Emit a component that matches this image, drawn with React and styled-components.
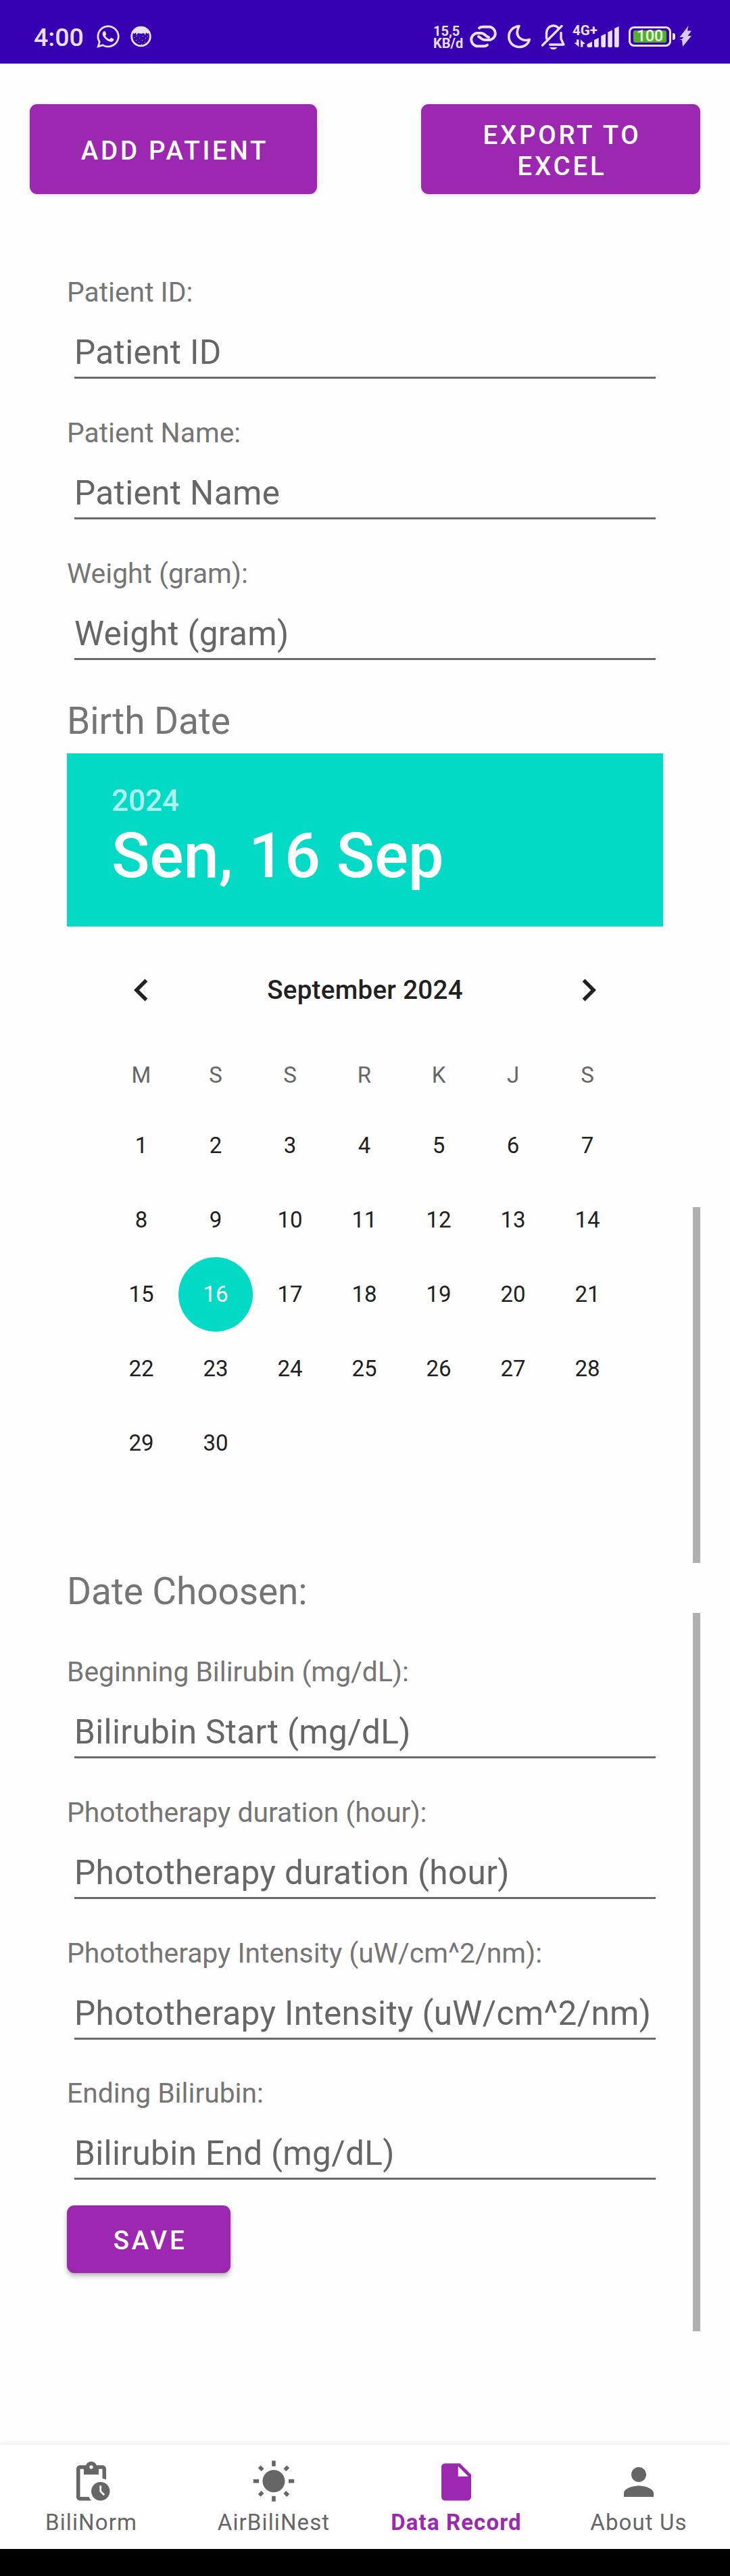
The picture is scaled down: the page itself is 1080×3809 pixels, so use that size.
import React from "react";
import styled, { createGlobalStyle } from "styled-components";
import { MdInsertDriveFile, MdPendingActions, MdPerson, MdWbSunny } from "react-icons/md";
import { FaWhatsapp } from "react-icons/fa";

const GlobalStyle = createGlobalStyle`
  body {
    margin: 0;
    background: #fefefe;
    font-family: Roboto, "Liberation Sans", sans-serif;
  }
  * { box-sizing: border-box; }
`;

const Screen = styled.div`
  position: relative;
  display: flex;
  flex-direction: column;
  width: 1080px;
  height: 3809px;
  background: #fefefe;
  overflow: hidden;
`;

const StatusBar = styled.header`
  display: flex;
  align-items: flex-start;
  justify-content: space-between;
  height: 94px;
  padding: 34px 56px 0 50px;
  background: #3700b3;
  color: #ebe0fa;
`;

const StatusGroup = styled.div`
  display: flex;
  align-items: center;
  height: 40px;
`;

const Clock = styled.span`
  width: 91px;
  padding-top: 2px;
  font-size: 37.5px;
  font-weight: 500;
  line-height: 40px;
`;

const NetSpeed = styled.div`
  display: flex;
  flex-direction: column;
  width: 52px;
  padding-top: 1px;
  font-size: 20px;
  font-weight: 700;
  line-height: 18px;
  white-space: nowrap;
`;

const Glyph = styled.svg`
  display: block;
  flex: none;
  margin-right: ${(p) => p.$gap || 0}px;
`;

const Signal = styled.div`
  display: flex;
  align-items: center;
  width: 83px;
  height: 40px;
`;

const Network = styled.div`
  display: flex;
  flex-direction: column;
  align-items: flex-start;
  gap: 2px;
  width: 21px;
  height: 40px;
  font-size: 20.5px;
  font-weight: 700;
  line-height: 22px;
  white-space: nowrap;
`;

const Battery = styled.div`
  display: flex;
  align-items: center;
  justify-content: center;
  width: 63px;
  height: 30px;
  padding: 3px 4px;
  border: 3px solid #ebe0fa;
  border-radius: 8px;
`;

const Charge = styled.span`
  display: flex;
  align-items: center;
  justify-content: center;
  width: 49px;
  height: 18px;
  border-radius: 3px;
  background: #54b02c;
  color: #f0fbe9;
  font-size: 23px;
  font-weight: 500;
  line-height: 18px;
`;

const Nub = styled.span`
  width: 4px;
  height: 10px;
  margin: 0 6px 0 2px;
  border-radius: 0 3px 3px 0;
  background: #ebe0fa;
`;

const Actions = styled.div`
  display: flex;
  justify-content: space-between;
  padding: 60px 44px 0;
`;

const Button = styled.button`
  display: flex;
  align-items: center;
  justify-content: center;
  width: ${(p) => p.$width}px;
  height: ${(p) => p.$height}px;
  padding: 4px 42px 0 46px;
  border: 0;
  border-radius: 11px;
  background: #9c27b0;
  box-shadow: ${(p) => (p.$raised ? "0 5px 7px rgba(0,0,0,0.24), 0 1px 3px rgba(0,0,0,0.12)" : "0 1px 6px rgba(0,0,0,0.14)")};
  color: #fff;
  font-family: inherit;
  font-size: 38.5px;
  font-weight: 500;
  letter-spacing: 3.7px;
  line-height: 46px;
  text-align: center;
`;

const Form = styled.main`
  display: flex;
  flex-direction: column;
  padding: 121px 99px 0;
`;

const Field = styled.div`
  display: flex;
  flex-direction: column;
  height: ${(p) => p.$height || 208}px;
`;

const Label = styled.label`
  margin-bottom: 35px;
  color: #757575;
  font-size: 40.8px;
  line-height: 48px;
`;

const Hint = styled.div`
  height: 69px;
  margin: 0 11px;
  border-bottom: 3px solid #696969;
  color: #666;
  font-size: 49.5px;
  letter-spacing: 0.35px;
  line-height: 60px;
  white-space: nowrap;
`;

const Heading = styled.h2`
  margin: ${(p) => p.$margin};
  color: #757575;
  font-size: 55px;
  font-weight: 400;
  letter-spacing: -0.1px;
  line-height: 66px;
`;

const DateHeader = styled.section`
  display: flex;
  flex-direction: column;
  height: 256px;
  padding: 44px 66px 0;
  background: #03dac6;
  color: #fff;
`;

const Year = styled.span`
  color: rgba(255, 255, 255, 0.7);
  font-size: 44px;
  font-weight: 500;
  line-height: 52px;
`;

const PickedDate = styled.span`
  font-size: 93.5px;
  font-weight: 500;
  line-height: 110px;
`;

const Calendar = styled.section`
  display: flex;
  flex-direction: column;
  width: 770px;
  margin-left: 55px;
`;

const MonthRow = styled.div`
  display: flex;
  align-items: center;
  justify-content: space-between;
  height: 187px;
  padding: 0 20px 0 22px;
`;

const Month = styled.span`
  color: #212121;
  font-size: 38.5px;
  font-weight: 500;
  letter-spacing: 0.3px;
`;

const Week = styled.div`
  display: grid;
  grid-template-columns: repeat(7, 110px);
  margin-bottom: 16px;
  color: #666;
  font-size: 33px;
  line-height: 66px;
  text-align: center;
`;

const Days = styled.div`
  display: grid;
  grid-template-columns: repeat(7, 110px);
  grid-auto-rows: 110px;
`;

const Day = styled.span`
  border-radius: 50%;
  background: ${(p) => (p.$selected ? "#03dac6" : "transparent")};
  color: ${(p) => (p.$selected ? "#fff" : "#212121")};
  font-size: 33px;
  line-height: 110px;
  text-align: center;
`;

const ScrollThumb = styled.div`
  position: absolute;
  left: 1025px;
  top: ${(p) => p.$top}px;
  width: 11px;
  height: ${(p) => p.$height}px;
  background: #b0b0b0;
`;

const BottomNav = styled.nav`
  display: grid;
  grid-template-columns: repeat(4, 1fr);
  height: 154px;
  margin-top: auto;
  background: #fff;
  box-shadow: 0 0 10px rgba(0, 0, 0, 0.1);
`;

const Tab = styled.a`
  display: flex;
  flex-direction: column;
  align-items: center;
  padding-top: 22px;
  color: ${(p) => (p.$active ? "#9c27b0" : "#666")};
  font-size: 33px;
  font-weight: ${(p) => (p.$active ? 700 : 400)};
  letter-spacing: 1.1px;
  line-height: 40px;
  gap: 7px;
  white-space: nowrap;
`;

const GestureBar = styled.footer`
  height: 40px;
  background: #000;
`;

const LinkIcon = () => (
  <Glyph $gap={13} width="44" height="36" viewBox="693 36 44 36" fill="none" stroke="#ebe0fa" strokeWidth="4" strokeLinecap="round">
    <path d="M721 66.500c-1.500 1.300-3 1.700-5 1.700h-11a9.800 9.800 0 0 1 0-19.200h7c5 0 7 5.500 11 6" />
    <path d="M709 41.500c1.500-1.300 3-1.700 5-1.700h11a9.800 9.800 0 0 1 0 19.200h-8c-5 0-6-4-9-5" />
  </Glyph>
);

const MoonIcon = () => (
  <Glyph $gap={14} width="36" height="36" viewBox="750 36 36 36" fill="none" stroke="#ebe0fa" strokeWidth="3.6" strokeLinejoin="round">
    <path d="M768 38.500C758.500 39.500 752.800 46.500 752.800 54c0 9 7 15.500 15.200 15.500 7.500 0 14-4.500 15.300-11-10 3.500-24-3.500-15.300-20z" />
  </Glyph>
);

const BellOffIcon = () => (
  <Glyph $gap={9} width="38" height="40" viewBox="800 34 38 40" fill="none" stroke="#ebe0fa" strokeWidth="3.400" strokeLinecap="round" strokeLinejoin="round">
    <path d="M808.500 57v-8c0-6.500 4.500-11 10-11 3.500 0 6 1.500 7.500 3.500" />
    <path d="M830 48.500v9l4 8.500h-20.500" />
    <path d="M802.500 67L831 38.500" />
    <path d="M813 70h11.500c-1 2-3 3.200-5.700 3.200s-4.800-1.200-5.800-3.200z" fill="#ebe0fa" stroke="none" />
  </Glyph>
);

const DataArrows = () => (
  <Glyph width="20" height="12" viewBox="847 58 20 12" fill="#ebe0fa">
    <path d="M853 58.500h3.500V69.500L849.500 63H853zM862.500 69.500H859V58.500L866 65h-3.500z" />
  </Glyph>
);

const SignalBars = () => (
  <Glyph width="48" height="34" viewBox="868 37 48 34" fill="#ebe0fa">
    <path d="M868.500 65.500l7.500-4v6.500a2 2 0 0 1-2 2h-3.500a2 2 0 0 1-2-2z" />
    <path d="M879 59l6.700-3v12a2 2 0 0 1-2 2H881a2 2 0 0 1-2-2z" />
    <path d="M889.300 53l6.700-3v18a2 2 0 0 1-2 2h-2.700a2 2 0 0 1-2-2z" />
    <path d="M899.300 47.500l6.500-3V68a2 2 0 0 1-2 2h-2.500a2 2 0 0 1-2-2z" />
    <path d="M909 42l6.700-3v29a2 2 0 0 1-2 2H911a2 2 0 0 1-2-2z" />
  </Glyph>
);

const BoltIcon = () => (
  <Glyph width="19" height="32" viewBox="1006 39 19 32" fill="#d9c9f3">
    <path d="M1019.500 39l-13 17h6l-3 3h-3.500l4 1.500L1011 70l13-16h-5.500l5.500-7.500h-6z" />
  </Glyph>
);

const NewAppIcon = () => (
  <Glyph width="31" height="32" viewBox="0 0 31 32">
    <circle cx="15.500" cy="16" r="13.800" fill="none" stroke="#ebe0fa" strokeWidth="2.800" />
    <path d="M3 10C6 4 11 1.500 15.500 1.500S25 4 28 10l-3 2-2-2-1 4-2-3c-3 1-6 1-9 0l-2 3-1-4-2 2z" fill="#ebe0fa" />
    <path d="M9 15h1v1H9zM13 18h1v1h-1zM18 15h1v1h-1zM22 18h1v1h-1zM8 21h1v1H8zM12 24h1v1h-1zM17 21h1v1h-1zM21 24h1v1h-1zM25 15h1v1h-1zM5 17h1v1H5zM16 27h1v1h-1z" fill="#ebe0fa" />
  </Glyph>
);

const Chevron = ({ d }) => (
  <Glyph width="66" height="66" viewBox="0 0 24 24" fill="#212121">
    <path d={d} />
  </Glyph>
);

const patientFields = [
  ["Patient ID:", "Patient ID"],
  ["Patient Name:", "Patient Name"],
  ["Weight (gram):", "Weight (gram)"],
];

const treatmentFields = [
  ["Beginning Bilirubin (mg/dL):", "Bilirubin Start (mg/dL)", 208],
  ["Phototherapy duration (hour):", "Phototherapy duration (hour)", 208],
  ["Phototherapy Intensity (uW/cm^2/nm):", "Phototherapy Intensity (uW/cm^2/nm)", 207],
  ["Ending Bilirubin:", "Bilirubin End (mg/dL)", 190],
];

const tabs = [
  ["BiliNorm", MdPendingActions],
  ["AirBiliNest", MdWbSunny],
  ["Data Record", MdInsertDriveFile],
  ["About Us", MdPerson],
];

export default function App() {
  return (
    <Screen>
      <GlobalStyle />
      <StatusBar>
        <StatusGroup>
          <Clock>4:00</Clock>
          <Glyph as={FaWhatsapp} size={38} $gap={14} />
          <NewAppIcon />
        </StatusGroup>
        <StatusGroup>
          <NetSpeed>
            <span>15,5</span>
            <span>KB/d</span>
          </NetSpeed>
          <LinkIcon />
          <MoonIcon />
          <BellOffIcon />
          <Signal>
            <Network>
              <span>4G+</span>
              <DataArrows />
            </Network>
            <SignalBars />
          </Signal>
          <Battery>
            <Charge>100</Charge>
          </Battery>
          <Nub />
          <BoltIcon />
        </StatusGroup>
      </StatusBar>

      <Actions>
        <Button $width={425} $height={133}>ADD PATIENT</Button>
        <Button $width={413} $height={133}>EXPORT TO EXCEL</Button>
      </Actions>

      <Form>
        {patientFields.map(([label, hint]) => (
          <Field key={label}>
            <Label>{label}</Label>
            <Hint>{hint}</Hint>
          </Field>
        ))}
        <Heading $margin="1px 0 15px">Birth Date</Heading>
        <DateHeader>
          <Year>2024</Year>
          <PickedDate>Sen, 16 Sep</PickedDate>
        </DateHeader>
        <Calendar>
          <MonthRow>
            <Chevron d="M15.410 7.410L14 6l-6 6 6 6 1.410-1.410L10.830 12z" />
            <Month>September 2024</Month>
            <Chevron d="M10 6L8.590 7.410 13.170 12l-4.580 4.590L10 18l6-6z" />
          </MonthRow>
          <Week>
            {["M", "S", "S", "R", "K", "J", "S"].map((d, i) => (
              <span key={i}>{d}</span>
            ))}
          </Week>
          <Days>
            {Array.from({ length: 30 }, (_, i) => (
              <Day key={i} $selected={i === 15}>{i + 1}</Day>
            ))}
          </Days>
        </Calendar>
        <Heading $margin="131px 0 62px">Date Choosen:</Heading>
        {treatmentFields.map(([label, hint, height]) => (
          <Field key={label} $height={height}>
            <Label>{label}</Label>
            <Hint>{hint}</Hint>
          </Field>
        ))}
        <Button $raised $width={242} $height={100}>SAVE</Button>
      </Form>

      <ScrollThumb $top={1785} $height={526} />
      <ScrollThumb $top={2385} $height={1062} />

      <BottomNav>
        {tabs.map(([name, Icon]) => (
          <Tab key={name} $active={name === "Data Record"}>
            <Icon size={66} />
            {name}
          </Tab>
        ))}
      </BottomNav>
      <GestureBar />
    </Screen>
  );
}
